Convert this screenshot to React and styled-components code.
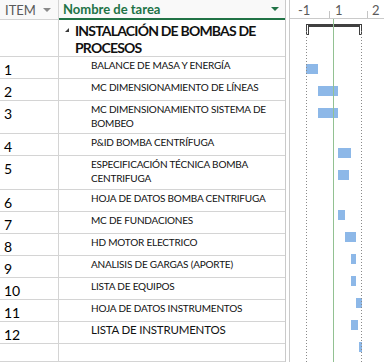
import React from 'react';
import styled, { createGlobalStyle } from 'styled-components';

const GlobalStyle = createGlobalStyle`
  html, body {
    margin: 0;
    padding: 0;
    background: #ffffff;
  }
  body {
    font-family: Lato, "Open Sans", "Liberation Sans", sans-serif;
    color: #000000;
  }
`;

const tasks = [
  { h: 40, summary: true, lines: ['INSTALACIÓN DE BOMBAS DE', 'PROCESOS'] },
  { h: 22, item: 1, lines: ['BALANCE DE MASA Y ENERGÍA'], bar: [16, 12] },
  { h: 22, item: 2, lines: ['MC DIMENSIONAMIENTO DE LÍNEAS'], bar: [28, 20] },
  { h: 40, item: 3, lines: ['MC DIMENSIONAMIENTO SISTEMA DE', 'BOMBEO'], bar: [28, 20] },
  { h: 22, item: 4, lines: ['P&ID BOMBA CENTRÍFUGA'], bar: [48, 13] },
  { h: 40, item: 5, lines: ['ESPECIFICACIÓN TÉCNICA BOMBA', 'CENTRIFUGA'], bar: [48, 11] },
  { h: 22, item: 6, lines: ['HOJA DE DATOS BOMBA CENTRIFUGA'], bar: [48, 7] },
  { h: 22, item: 7, lines: ['MC DE FUNDACIONES'], bar: [55, 11] },
  { h: 22, item: 8, lines: ['HD MOTOR ELECTRICO'], bar: [61, 5] },
  { h: 22, item: 9, lines: ['ANALISIS DE GARGAS (APORTE)'], bar: [61, 5] },
  { h: 22, item: 10, lines: ['LISTA DE EQUIPOS'], bar: [66, 6] },
  { h: 22, item: 11, lines: ['HOJA DE DATOS INSTRUMENTOS'], bar: [61, 7] },
  { h: 22, item: 12, lines: ['LISTA DE INSTRUMENTOS'], bar: [69, 3], large: true },
  { h: 22, lines: [] },
];

const Page = styled.div`
  display: flex;
  width: 384px;
  height: 362px;
  overflow: hidden;
  background: #ffffff;
`;

const Table = styled.div`
  width: 285px;
  flex: none;
  display: flex;
  flex-direction: column;
`;

const HeaderRow = styled.div`
  display: grid;
  grid-template-columns: 59px 1fr;
  height: 20px;
  background: #f9f9f9;
`;

const HeadCell = styled.div`
  display: flex;
  align-items: center;
  justify-content: space-between;
  box-sizing: border-box;
  padding: 0 ${(p) => (p.$green ? '6px' : '7px')} 0 ${(p) => (p.$green ? '4px' : '5px')};
  font-size: 13px;
  font-weight: ${(p) => (p.$green ? 700 : 400)};
  color: ${(p) => (p.$green ? '#217346' : '#5a5a5a')};
  border-bottom: ${(p) => (p.$green ? '2px solid #217346' : '1px solid #d4d4d4')};
  border-right: ${(p) => (p.$green ? 'none' : '1px solid #d4d4d4')};
  line-height: 18px;
`;

const Caret = styled.span`
  width: 0;
  height: 0;
  border-left: 4px solid transparent;
  border-right: 4px solid transparent;
  border-top: 4px solid ${(p) => p.$color};
`;

const Row = styled.div`
  display: grid;
  grid-template-columns: 59px 1fr;
  height: ${(p) => p.$h}px;
  box-sizing: border-box;
  border-bottom: 1px solid #d4d4d4;
`;

const ItemCell = styled.div`
  border-right: 1px solid #d4d4d4;
  padding: 4px 0 0 4px;
  font-size: 14px;
  line-height: 17px;
`;

const NameCell = styled.div`
  display: flex;
  align-items: flex-start;
  padding: ${(p) => (p.$summary ? '2px 0 0 6px' : p.$large ? '1px 0 0 32px' : '1px 0 0 32px')};
  font-size: ${(p) => (p.$summary ? '14px' : p.$large ? '11.5px' : '10px')};
  font-weight: ${(p) => (p.$summary ? 700 : 400)};
  line-height: ${(p) => (p.$summary ? '17px' : '14px')};
  letter-spacing: ${(p) => (p.$summary ? '-0.8px' : '-0.2px')};
  color: #111111;
`;

const Toggle = styled.span`
  flex: none;
  width: 0;
  height: 0;
  margin: 6px 6px 0 0;
  border-left: 4px solid transparent;
  border-bottom: 4px solid #3a3a3a;
`;

const Splitter = styled.div`
  flex: none;
  width: 3px;
  border-left: 1px solid #cacaca;
  border-right: 1px solid #cacaca;
`;

const Gantt = styled.div`
  flex: 1;
  display: flex;
  flex-direction: column;
`;

const Timescale = styled.div`
  display: grid;
  grid-template-columns: 39px 38px 1fr;
  height: 20px;
  box-sizing: border-box;
  border-bottom: 1px solid #cacaca;
`;

const Unit = styled.div`
  position: relative;
  padding: 2px 0 0 ${(p) => p.$pad}px;
  font-size: 13px;
  line-height: 16px;
  color: #5a5a5a;

  &::before {
    content: '';
    display: ${(p) => (p.$tick ? 'block' : 'none')};
    position: absolute;
    left: 0;
    bottom: 0;
    width: 1px;
    height: 7px;
    background: #c4c4c4;
  }
`;

const Chart = styled.div`
  position: relative;
  flex: 1;
`;

const ChartRow = styled.div`
  position: relative;
  height: ${(p) => p.$h}px;
`;

const Bar = styled.div`
  position: absolute;
  top: 5px;
  height: 10px;
  background: #8db8e8;
`;

const SummaryBar = styled.svg`
  position: absolute;
  top: 5px;
  left: 16px;
`;

const Guide = styled.div`
  position: absolute;
  top: ${(p) => p.$top}px;
  bottom: 0;
  left: ${(p) => p.$left}px;
  width: 1px;
  ${(p) =>
    p.$dotted
      ? 'background: repeating-linear-gradient(to bottom, #8a8a8a 0 1px, transparent 1px 3px);'
      : 'background: #92c192;'}
`;

export default function App() {
  return (
    <Page>
      <GlobalStyle />
      <Table>
        <HeaderRow>
          <HeadCell>
            ITEM
            <Caret $color="#8a8a8a" />
          </HeadCell>
          <HeadCell $green>
            Nombre de tarea
            <Caret $color="#217346" />
          </HeadCell>
        </HeaderRow>
        {tasks.map((t, i) => (
          <Row key={i} $h={t.h}>
            <ItemCell>{t.item}</ItemCell>
            <NameCell $summary={t.summary} $large={t.large}>
              {t.summary && <Toggle />}
              <div>
                {t.lines.map((l, j) => (
                  <div key={j}>{l}</div>
                ))}
              </div>
            </NameCell>
          </Row>
        ))}
      </Table>
      <Splitter />
      <Gantt>
        <Timescale>
          <Unit $pad={8}>-1</Unit>
          <Unit $pad={6} $tick>1</Unit>
          <Unit $pad={5} $tick>2</Unit>
        </Timescale>
        <Chart>
          {tasks.map((t, i) => (
            <ChartRow key={i} $h={t.h}>
              {t.summary && (
                <SummaryBar width="56" height="11" viewBox="0 0 56 11">
                  <rect x="0" y="0" width="56" height="3" fill="#404040" />
                  <rect x="0.5" y="0.5" width="2" height="10" fill="#ffffff" stroke="#404040" />
                  <rect x="53.5" y="0.5" width="2" height="10" fill="#ffffff" stroke="#404040" />
                </SummaryBar>
              )}
              {t.bar && <Bar style={{ left: t.bar[0], width: t.bar[1] }} />}
            </ChartRow>
          ))}
          <Guide $left={16} $top={12} $dotted />
          <Guide $left={71} $top={12} $dotted />
          <Guide $left={43} $top={0} />
        </Chart>
      </Gantt>
    </Page>
  );
}
